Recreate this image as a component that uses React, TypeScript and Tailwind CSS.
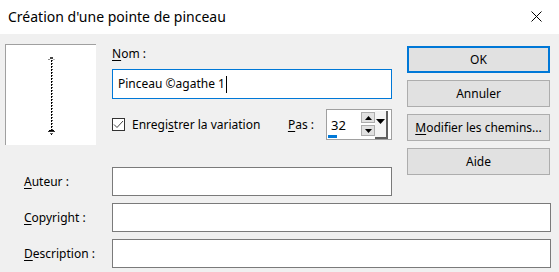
import React from 'react';

const U: React.FC<{ children: React.ReactNode }> = ({ children }) => (
  <span className="underline underline-offset-2 decoration-1">{children}</span>
);

const Btn: React.FC<{ children: React.ReactNode; primary?: boolean }> = ({ children, primary }) => (
  <div
    className={`h-[27px] w-[143px] flex items-center justify-center bg-[#e1e1e1] ${
      primary ? 'border-2 border-[#0078d7]' : 'border border-[#adadad]'
    }`}
  >
    {children}
  </div>
);

const BrushPreview: React.FC = () => (
  <svg width="91" height="101" viewBox="0 0 91 101">
    {/* dotted stroke */}
    <line x1="45.5" y1="15" x2="45.5" y2="86" stroke="#000" strokeWidth="1" strokeDasharray="2 1" />
    <line x1="46.5" y1="15" x2="46.5" y2="86" stroke="#555" strokeWidth="1" strokeDasharray="1 2" />
    {/* top end */}
    <rect x="44" y="12" width="3" height="2" fill="#444" />
    <rect x="42" y="14" width="2" height="1" fill="#888" />
    <rect x="47" y="14" width="2" height="1" fill="#bbb" />
    {/* bottom end */}
    <rect x="43" y="85" width="5" height="1" fill="#000" />
    <rect x="42" y="86" width="7" height="1" fill="#333" />
    <rect x="44" y="88" width="3" height="1" fill="#666" />
    <rect x="45" y="89" width="1" height="1" fill="#000" />
  </svg>
);

const Triangle: React.FC<{ up?: boolean }> = ({ up }) => (
  <svg width="7" height="4" viewBox="0 0 7 4">
    <path d={up ? 'M0 4 L3.5 0 L7 4 Z' : 'M0 0 L7 0 L3.5 4 Z'} fill="#000" />
  </svg>
);

export default function App() {
  return (
    <div
      className="w-[559px] h-[272px] bg-[#f0f0f0] text-[12px] text-black overflow-hidden"
      style={{ fontFamily: '"Noto Sans", "Open Sans", Arial, sans-serif' }}
    >
      {/* title bar */}
      <div className="h-[34px] bg-white flex items-center justify-between pl-[8px] pr-[17px]">
        <span className="text-[14px] leading-none -mt-[1px]">Création d'une pointe de pinceau</span>
        <svg width="11" height="11" viewBox="0 0 11 11" className="-mt-[2px]">
          <path d="M0.5 0.5 L10.5 10.5 M10.5 0.5 L0.5 10.5" stroke="#000" strokeWidth="1" />
        </svg>
      </div>

      <div className="flex">
        {/* left area */}
        <div className="w-[392px]">
          <div className="flex">
            <div className="ml-[5px] mt-[10px] w-[91px] h-[101px] bg-white border-t border-l border-[#a0a0a0]">
              <BrushPreview />
            </div>
            <div className="ml-[16px] mt-[12px] w-[280px] flex flex-col">
              <div className="h-[16px] leading-[16px]">
                <U>N</U>om :
              </div>
              <div className="mt-[7px] h-[30px] bg-white border border-[#0078d7] flex items-center pl-[5px]">
                <span>Pinceau ©agathe 1</span>
                <span className="w-px h-[17px] bg-black ml-[1px]" />
              </div>
              <div className="mt-[10px] flex items-center h-[31px]">
                <div className="w-[13px] h-[13px] border border-[#333] bg-white flex items-center justify-center">
                  <svg width="11" height="11" viewBox="0 0 11 11">
                    <path d="M1 5.5 L4 8.5 L10 2" stroke="#444" strokeWidth="1" fill="none" />
                  </svg>
                </div>
                <span className="ml-[7px]">
                  Enregi<U>s</U>trer la variation
                </span>
                <span className="ml-auto mr-[12px]">
                  <U>P</U>as :
                </span>
                <div className="relative w-[66px] h-[31px] bg-white border border-[#a0a0a0] flex items-center">
                  <span className="ml-[4px] mt-[2px] text-[13px]">32</span>
                  <div className="ml-auto flex items-start h-full pt-[1px]">
                    <div className="flex flex-col gap-[2px] mt-[1px]">
                      <div className="w-[14px] h-[11px] bg-[#e1e1e1] border border-[#adadad] flex items-center justify-center">
                        <Triangle up />
                      </div>
                      <div className="w-[14px] h-[11px] bg-[#e1e1e1] border border-[#adadad] flex items-center justify-center">
                        <Triangle />
                      </div>
                    </div>
                    <div className="w-[13px] h-[28px] bg-[#f4f4f4] border-r-2 border-b-2 border-[#606060] flex justify-center pt-[8px] mr-[3px]">
                      <svg width="9" height="5" viewBox="0 0 9 5">
                        <path d="M0 0 L9 0 L4.5 5 Z" fill="#000" />
                      </svg>
                    </div>
                  </div>
                  <div className="absolute left-[1px] bottom-[1px] w-[9px] h-[3px] bg-[#0078d7]" />
                </div>
              </div>
            </div>
          </div>
          <div className="mt-[22px] flex items-center">
            <span className="w-[112px] pl-[24px]">
              <U>A</U>uteur :
            </span>
            <div className="w-[280px] h-[29px] bg-white border border-[#7a7a7a]" />
          </div>
        </div>

        {/* buttons */}
        <div className="ml-[15px] mt-[12px] flex flex-col gap-[7px]">
          <Btn primary>OK</Btn>
          <Btn>Annuler</Btn>
          <Btn>
            <span>
              <U>M</U>odifier les chemins...
            </span>
          </Btn>
          <Btn>Aide</Btn>
        </div>
      </div>

      <div className="mt-[7px] flex flex-col gap-[7px]">
        <div className="flex items-center">
          <span className="w-[112px] pl-[24px]">
            <U>C</U>opyright :
          </span>
          <div className="w-[439px] h-[29px] bg-white border border-[#7a7a7a]" />
        </div>
        <div className="flex items-center">
          <span className="w-[112px] pl-[24px]">
            <U>D</U>escription :
          </span>
          <div className="w-[439px] h-[29px] bg-white border border-[#7a7a7a]" />
        </div>
      </div>
    </div>
  );
}
